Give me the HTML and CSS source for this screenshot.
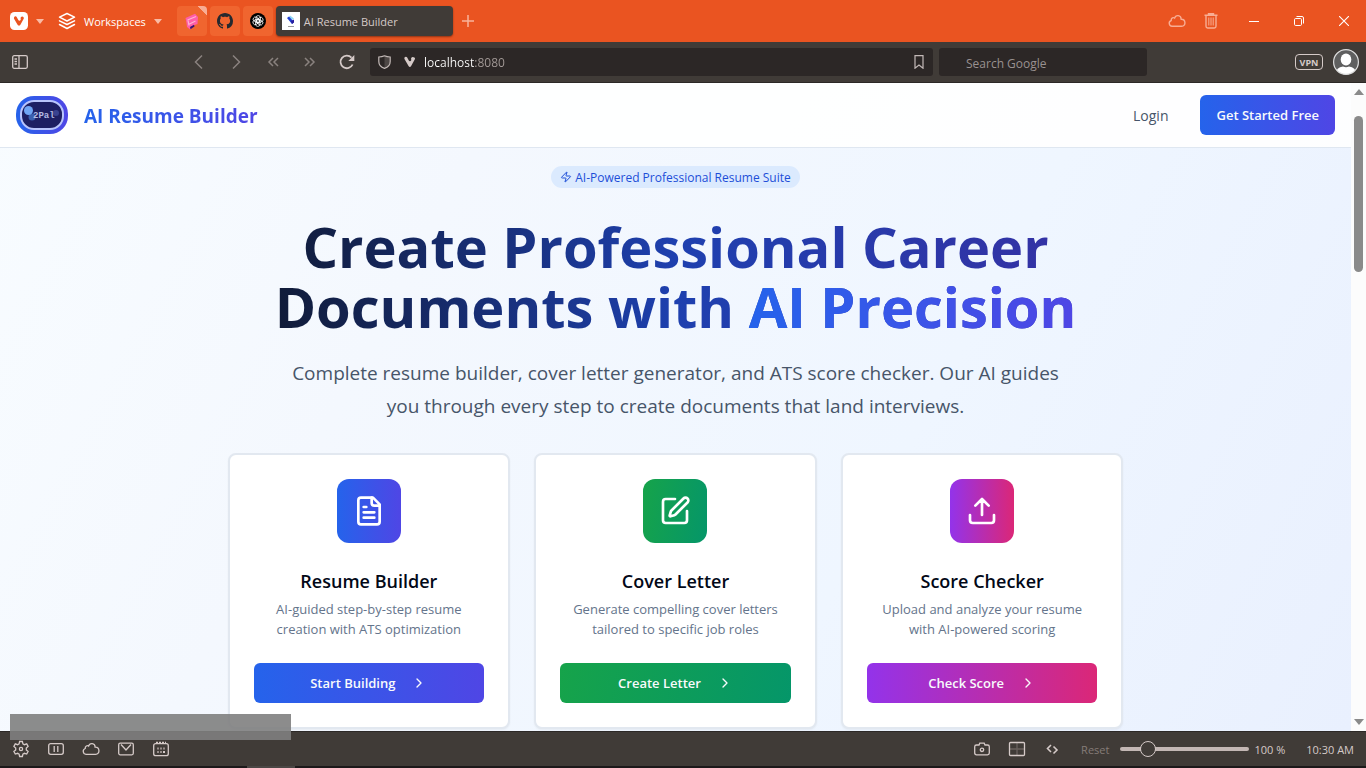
FILE: index.html
```html
<!DOCTYPE html>
<html lang="en">
<head>
<meta charset="utf-8">
<meta name="viewport" content="width=device-width, initial-scale=1">
<title>AI Resume Builder</title>
<link rel="stylesheet" href="styles.css">
</head>
<body>
<div class="browser">
  <div class="tabbar">
    <button class="bare menu" aria-label="Vivaldi menu">
      <svg width="18" height="18" viewBox="0 0 18 18"><rect width="18" height="18" rx="4.5" fill="#fff"/><path d="M4.100 5.200c.7-1.200 2.200-1 2.700 0l1.500 2.900c.5 1 2 .9 2.400-.3.1-.5 0-.9-.1-1.300-.2-1 .5-2 1.600-2s2 1.100 1.500 2.200l-3.300 6c-.7 1.200-2.100 1.200-2.800 0L4.200 7c-.3-.6-.4-1.200-.1-1.800z" fill="#ea5421"/></svg>
      <svg width="8" height="5" viewBox="0 0 8 5"><path d="M0 0h8L4 5z" fill="#f9bba5"/></svg>
    </button>
    <button class="bare workspaces">
      <svg width="18" height="18" viewBox="0 0 18 18" fill="none" stroke="#fff" stroke-width="1.500" stroke-linejoin="round" stroke-linecap="round"><path d="M9 1.500l7.500 3.700L9 9 1.500 5.200z"/><path d="M1.500 8.800L9 12.500l7.500-3.700M1.500 12.500L9 16.500l7.500-4"/></svg>
      <span>Workspaces</span>
      <svg width="8" height="5" viewBox="0 0 8 5"><path d="M0 0h8L4 5z" fill="#f9bba5"/></svg>
    </button>
    <div class="tabs">
      <button class="pin pin-marked" aria-label="Pinned tab">
        <svg width="16" height="17" viewBox="0 0 16 17"><path d="M1.500 5L11 .8l3 3.200-.5 7-3 1-4.500 4.500-3-2.500-.5-4z" fill="#ff5ea8"/><path d="M3.500 7l8.500-3.500M4.500 11.500l7-3.500M4 7.500l1 5" stroke="#ffb3d3" stroke-width="1.200" fill="none"/><path d="M6 14l4-2.200.5 1.700L6.500 16.300z" fill="#3b1673"/></svg>
      </button>
      <button class="pin" aria-label="GitHub">
        <svg width="16" height="16" viewBox="0 0 16 16"><path fill="#24292f" d="M8 0C3.580 0 0 3.580 0 8c0 3.540 2.290 6.530 5.470 7.590.4.070.55-.17.55-.38 0-.19-.01-.82-.01-1.490-2.010.37-2.530-.49-2.690-.94-.09-.23-.48-.94-.82-1.130-.28-.15-.68-.52-.01-.53.63-.01 1.080.58 1.230.82.72 1.210 1.870.87 2.330.66.070-.52.28-.87.51-1.070-1.780-.2-3.640-.89-3.640-3.950 0-.87.31-1.590.82-2.150-.08-.2-.36-1.020.08-2.120 0 0 .67-.21 2.200.82.64-.18 1.320-.27 2-.27s1.360.09 2 .27c1.530-1.040 2.200-.82 2.200-.82.44 1.100.16 1.920.08 2.120.51.56.82 1.270.82 2.150 0 3.070-1.870 3.750-3.650 3.950.29.25.54.73.54 1.480 0 1.070-.01 1.930-.01 2.200 0 .21.15.46.55.38A8.010 8.010 0 0 0 16 8c0-4.420-3.580-8-8-8z"/></svg>
      </button>
      <button class="pin" aria-label="ChatGPT">
        <svg width="16" height="16" viewBox="0 0 16 16"><circle cx="8" cy="8" r="8" fill="#000"/><g fill="none" stroke="#fff" stroke-width=".8"><rect x="6" y="2.600" width="4.400" height="6.800" rx="2.200"/><rect x="6" y="2.600" width="4.400" height="6.800" rx="2.200" transform="rotate(60 8 8)"/><rect x="6" y="2.600" width="4.400" height="6.800" rx="2.200" transform="rotate(120 8 8)"/><rect x="6" y="2.600" width="4.400" height="6.800" rx="2.200" transform="rotate(180 8 8)"/><rect x="6" y="2.600" width="4.400" height="6.800" rx="2.200" transform="rotate(240 8 8)"/><rect x="6" y="2.600" width="4.400" height="6.800" rx="2.200" transform="rotate(300 8 8)"/></g></svg>
      </button>
      <button class="tab-active">
        <svg width="18" height="18" viewBox="0 0 18 18"><rect width="18" height="18" fill="#fff"/><path d="M8 3.500l4 3-2 1.500-3-2.500z" fill="#8ed7f5"/><path d="M5 6l2-1.500 5 5.500-2 2z" fill="#1f3fd0"/><path d="M9 9l3-1.500v3L10 12z" fill="#2a1d9c"/><path d="M6 14.500h6" stroke="#9a9a9a"/></svg>
        <span>AI Resume Builder</span>
      </button>
      <button class="bare newtab" aria-label="New tab"><svg width="12" height="12" viewBox="0 0 12 12"><path d="M6 0v12M0 6h12" stroke="#f9b39b" stroke-width="1.500"/></svg></button>
    </div>
    <div class="window-actions">
      <button class="bare" aria-label="Sync"><svg width="18" height="14" viewBox="0 0 18 14" fill="none" stroke="#f8ad94" stroke-width="1.400"><path d="M4 12.300a3 3 0 0 1-.8-5.800C3 4 5.400 3 6.600 4.100 7.700.5 13 .8 13.200 5.200c4.600-.2 5.200 7.100.4 7.100z"/></svg></button>
      <button class="bare" aria-label="Closed tabs"><svg width="14" height="16" viewBox="0 0 14 16" fill="none" stroke="#f8ad94" stroke-width="1.400"><path d="M.5 2.300h13M4.500 1.500V.7h5v.8M2 2.500v10.800q0 1.700 1.700 1.700h6.600q1.700 0 1.700-1.700V2.500"/><path d="M4.800 4.500v8M7 4.500v8M9.200 4.500v8" stroke-width="1"/></svg></button>
      <button class="bare win" aria-label="Minimize"><svg width="10" height="10" viewBox="0 0 10 10"><path d="M0 5.500h10" stroke="#fff"/></svg></button>
      <button class="bare win" aria-label="Restore"><svg width="10" height="10" viewBox="0 0 10 10" fill="none" stroke="#fff"><rect x=".5" y="2.500" width="7" height="7" rx="1.200"/><path d="M2.500.5H8Q9.500.5 9.500 2v5.500"/></svg></button>
      <button class="bare win" aria-label="Close"><svg width="10" height="10" viewBox="0 0 10 10"><path d="M0 0l10 10M10 0L0 10" stroke="#fff" stroke-width="1.100"/></svg></button>
    </div>
  </div>

  <div class="navbar">
    <div class="nav-left">
      <button class="bare panel" aria-label="Show panel"><svg width="16" height="14" viewBox="0 0 16 14" fill="none" stroke="#d5cac8" stroke-width="1.300"><rect x=".7" y=".7" width="14.600" height="12.600" rx="1.500"/><path d="M7 .7v12.600M2.500 4h2.500M2.500 6.500h2.500M2.500 9h2.500"/></svg></button>
      <div class="nav-buttons">
        <button class="bare" aria-label="Back"><svg width="16" height="16" viewBox="0 0 16 16"><path d="M11 1.500L4.500 8l6.500 6.500"/></svg></button>
        <button class="bare" aria-label="Forward"><svg width="16" height="16" viewBox="0 0 16 16"><path d="M5 1.500L11.500 8 5 14.500"/></svg></button>
        <button class="bare" aria-label="Rewind"><svg width="16" height="16" viewBox="0 0 16 16"><path d="M8 4L4 8l4 4M13 4L9 8l4 4"/></svg></button>
        <button class="bare" aria-label="Fast forward"><svg width="16" height="16" viewBox="0 0 16 16"><path d="M3 4l4 4-4 4M8 4l4 4-4 4"/></svg></button>
        <button class="bare reload" aria-label="Reload"><svg width="16" height="16" viewBox="0 0 16 16"><path d="M13.600 10.500A6.300 6.300 0 1 1 12.500 3.700"/><path class="solid" d="M15.300 1v6H9.300z"/></svg></button>
      </div>
    </div>
    <div class="address">
      <svg width="13" height="14" viewBox="0 0 13 14"><path d="M6.500 1v12c2-.8 5-2.800 5.300-6V2Q9 2 6.500 1z" fill="#4d4745"/><path d="M6.500.8Q9 2 12.200 2v4.500c0 3.700-3 6-5.700 6.900C3.800 12.500.8 10.200.8 6.500V2Q4 2 6.500.8z" fill="none" stroke="#c3b9b7" stroke-width="1.200"/></svg>
      <svg width="12" height="12" viewBox="0 0 12 12"><path d="M.5 1.600c.7-1.200 2.200-1 2.700 0l1.600 3c.5 1 2 .9 2.400-.3.1-.5 0-.9-.1-1.300-.2-1 .5-2 1.600-2s2.800.9 2.300 2l-4 7.300c-.6 1-1.700 1-2.300 0L.6 3.300c-.3-.6-.4-1.100-.1-1.700z" fill="#d5cac8"/></svg>
      <input class="url" type="text" value="localhost:8080" aria-label="Address">
      <button class="bare" aria-label="Bookmark"><svg width="10" height="14" viewBox="0 0 10 14"><path d="M1 .7h8v12.500L5 10 1 13.200z" fill="none" stroke="#c3b9b7" stroke-width="1.200"/></svg></button>
    </div>
    <input class="search" type="text" placeholder="Search Google" aria-label="Search Google">
    <div class="nav-right">
      <button class="vpn">VPN</button>
      <button class="bare" aria-label="Profile"><svg width="26" height="26" viewBox="0 0 26 26"><defs><clipPath id="av"><circle cx="13" cy="13" r="12.500"/></clipPath></defs><circle cx="13" cy="13" r="12.500" fill="#5f5f5f"/><g clip-path="url(#av)" fill="#fff"><ellipse cx="13" cy="10.500" rx="5.300" ry="6"/><path d="M2 27q1-9 8-9.500 3 1.500 6 0 7 .5 8 9.500z"/></g><circle cx="13" cy="13" r="12.400" fill="none" stroke="#ddd" stroke-width="1.200"/></svg></button>
    </div>
  </div>

  <div class="viewport">
    <div class="page">
      <header class="site-header">
        <a class="brand" href="#">
          <svg width="52" height="38" viewBox="0 0 52 38"><defs><linearGradient id="lg"><stop stop-color="#2563eb"/><stop offset="1" stop-color="#4f46e5"/></linearGradient></defs><rect width="52" height="38" rx="18" fill="url(#lg)"/><rect x="5" y="5" width="42" height="28" rx="13" fill="#1e1f63" stroke="#b9c4fb" stroke-width="2"/><circle cx="40" cy="17" r="3" fill="#3a4390"/><circle cx="16" cy="21" r="3.500" fill="#3c5fae"/><circle cx="12.500" cy="14.500" r="4.500" fill="#70a5f5"/><text x="17" y="22" class="logo-text">2Pal</text></svg>
          <span class="brand-name">AI Resume Builder</span>
        </a>
        <nav class="site-nav">
          <a class="login" href="#">Login</a>
          <button class="btn blue">Get Started Free</button>
        </nav>
      </header>
      <main class="hero">
        <div class="badge"><svg width="12" height="12" viewBox="0 0 24 24" fill="none" stroke="currentColor" stroke-width="2" stroke-linecap="round" stroke-linejoin="round"><path d="M4 14a1 1 0 0 1-.78-1.630l9.900-10.200a.5.5 0 0 1 .86.460l-1.920 6.020A1 1 0 0 0 13 10h7a1 1 0 0 1 .78 1.630l-9.900 10.200a.5.5 0 0 1-.86-.46l1.920-6.020A1 1 0 0 0 11 14z"/></svg>AI-Powered Professional Resume Suite</div>
        <h1>Create Professional Career<br>Documents with <span>AI Precision</span></h1>
        <p class="lead">Complete resume builder, cover letter generator, and ATS score checker. Our AI guides<br>you through every step to create documents that land interviews.</p>
        <div class="cards">
          <section class="card">
            <div class="icon blue"><svg viewBox="0 0 24 24"><path d="M15 2H6a2 2 0 0 0-2 2v16a2 2 0 0 0 2 2h12a2 2 0 0 0 2-2V7Z"/><path d="M14 2v4a2 2 0 0 0 2 2h4M10 9H8M16 13H8M16 17H8"/></svg></div>
            <h2>Resume Builder</h2>
            <p>AI-guided step-by-step resume<br>creation with ATS optimization</p>
            <button class="btn blue">Start Building<svg viewBox="0 0 24 24"><path d="m9 18 6-6-6-6"/></svg></button>
          </section>
          <section class="card">
            <div class="icon green"><svg viewBox="0 0 24 24"><path d="M12 3H5a2 2 0 0 0-2 2v14a2 2 0 0 0 2 2h14a2 2 0 0 0 2-2v-7"/><path d="M18.375 2.625a1 1 0 0 1 3 3l-9.013 9.014a2 2 0 0 1-.853.505l-2.873.840a.5.5 0 0 1-.620-.620l.840-2.873a2 2 0 0 1 .506-.852z"/></svg></div>
            <h2>Cover Letter</h2>
            <p>Generate compelling cover letters<br>tailored to specific job roles</p>
            <button class="btn green">Create Letter<svg viewBox="0 0 24 24"><path d="m9 18 6-6-6-6"/></svg></button>
          </section>
          <section class="card">
            <div class="icon pink"><svg viewBox="0 0 24 24"><path d="M21 15v4a2 2 0 0 1-2 2H5a2 2 0 0 1-2-2v-4M17 8l-5-5-5 5M12 3v12"/></svg></div>
            <h2>Score Checker</h2>
            <p>Upload and analyze your resume<br>with AI-powered scoring</p>
            <button class="btn pink">Check Score<svg viewBox="0 0 24 24"><path d="m9 18 6-6-6-6"/></svg></button>
          </section>
        </div>
      </main>
    </div>
    <div class="scrollbar">
      <svg width="10" height="6" viewBox="0 0 10 6"><path d="M0 6L5 0l5 6z" fill="#8a8a8a"/></svg>
      <div class="rail"><div class="thumb"></div></div>
      <svg width="10" height="6" viewBox="0 0 10 6"><path d="M0 0l5 6 5-6z" fill="#8a8a8a"/></svg>
    </div>
  </div>

  <div class="statusbar">
    <div class="link-preview"></div>
    <div class="status-left">
      <button class="bare" aria-label="Settings"><svg width="18" height="18" viewBox="0 0 18 18"><path d="M7.600 1.500h2.800l.5 2.300 1.500.9 2.300-.8 1.400 2.500-1.800 1.600v1.900l1.800 1.600-1.400 2.500-2.300-.7-1.500.8-.5 2.400H7.600l-.5-2.400-1.500-.8-2.300.7-1.400-2.500 1.800-1.600V8L1.900 6.400l1.400-2.500 2.300.8 1.500-.9z"/><circle cx="9" cy="9" r="1.600"/></svg></button>
      <button class="bare" aria-label="Break mode"><svg width="18" height="18" viewBox="0 0 18 18"><rect x="1.700" y="3.700" width="14.600" height="10.600" rx="2"/><path d="M7.200 6v6M10.800 6v6"/></svg></button>
      <button class="bare" aria-label="Sync"><svg width="18" height="18" viewBox="0 0 18 18"><path d="M4 14.300a3 3 0 0 1-.8-5.800C3 6 5.400 5 6.600 6.100 7.700 2.500 13 2.800 13.200 7.200c4.600-.2 5.200 7.100.4 7.100z"/></svg></button>
      <button class="bare" aria-label="Mail"><svg width="18" height="18" viewBox="0 0 18 18"><rect x="1.700" y="3.200" width="14.600" height="11.600" rx="1.500"/><path d="M4 4.500l5 5.500 5-5.500"/></svg></button>
      <button class="bare" aria-label="Calendar"><svg width="18" height="18" viewBox="0 0 18 18"><rect x="1.700" y="3.700" width="14.600" height="12" rx="2"/><path d="M4 2.800h10" stroke-width="2" stroke-dasharray="2 1"/><path d="M5 8.500h8M5 12h5" stroke="#978d8a" stroke-width="2" stroke-dasharray="2 1"/><path d="M11 12h2" stroke-width="2"/></svg></button>
    </div>
    <div class="status-right">
      <button class="bare" aria-label="Capture"><svg width="18" height="18" viewBox="0 0 18 18"><path d="M3.500 5H6l.8-1.800h4.400L12 5h2.500q1.800 0 1.800 1.800V13q0 1.800-1.800 1.800h-11Q1.700 14.800 1.700 13V6.800Q1.700 5 3.500 5z"/><circle cx="9" cy="9.800" r="1.700"/></svg></button>
      <button class="bare" aria-label="Tiling"><svg width="18" height="18" viewBox="0 0 18 18"><path d="M9 3v12M2 9h14" style="stroke:#69615e"/><rect x="1.500" y="2.500" width="15" height="13" rx="1"/></svg></button>
      <button class="bare" aria-label="Page actions"><svg width="18" height="18" viewBox="0 0 18 18"><path d="M8 5L4.500 8.500 8 12M10.500 6.500L14 10l-3.500 3.500" stroke-width="1.600"/></svg></button>
      <button class="bare reset">Reset</button>
      <input class="zoom" type="range" min="0" max="100" value="17" aria-label="Page zoom">
      <span class="percent">100 %</span>
      <span class="clock">10:30 AM</span>
    </div>
  </div>
  <div class="edge"><div class="edge-mark"></div></div>
</div>
</body>
</html>
```
FILE: styles.css
```css
* { box-sizing: border-box; }
body { margin: 0; font-family: "Open Sans", "Noto Sans", sans-serif; }
button, input { font: inherit; }
svg { display: block; flex: none; }
h1, h2, p { margin: 0; }

.browser { display: flex; flex-direction: column; height: 100vh; overflow: hidden; font-size: 11px; }
.bare { display: flex; align-items: center; justify-content: center; border: 0; padding: 0; background: none; color: inherit; }

/* Tab bar */
.tabbar { display: flex; align-items: center; height: 42px; flex: none; padding-left: 10px; background: #ea5421; color: #fff; }
.menu { gap: 8px; }
.workspaces { gap: 8px; margin-left: 14px; }
.tabs { display: flex; align-items: center; gap: 3px; margin-left: 15px; }
.pin { display: flex; align-items: center; justify-content: center; width: 30px; height: 30px; border: 0; padding: 0; border-radius: 4px; background: #f0652f; }
.pin-marked { background: linear-gradient(45deg, transparent 84%, #f8ad94 84%) #f0652f; }
.tab-active { display: flex; align-items: center; gap: 4px; width: 177px; height: 30px; border: 0; padding: 0 6px; border-radius: 4px; background: #403b37; color: #d5cac8; box-shadow: 0 1px 2px rgba(0, 0, 0, .4); }
.newtab { width: 24px; height: 30px; }
.window-actions { display: flex; align-items: center; gap: 18px; margin-left: auto; }
.win { width: 45px; height: 42px; }
.win + .win { margin-left: -18px; }
.window-actions .win:nth-child(3) { margin-left: -5px; }

/* Navigation bar */
.navbar { display: flex; align-items: center; gap: 6px; height: 41px; flex: none; padding: 0 7px 0 12px; background: #403b37; border-bottom: 1px solid #2c2826; }
.nav-left { display: flex; align-items: center; justify-content: space-between; width: 352px; flex: none; padding-right: 9px; }
.nav-buttons { display: flex; gap: 21px; }
.nav-buttons path { fill: none; stroke: #8a827f; stroke-width: 1.500; }
.nav-buttons .reload path { stroke: #d5cac8; stroke-width: 1.800; }
.nav-buttons .reload .solid { fill: #d5cac8; stroke: none; }
.address { display: flex; align-items: center; flex: 1; gap: 13px; height: 28px; min-width: 0; padding: 0 9px 0 8px; border-radius: 3px; background: #2c2726; }
.url { flex: 1; min-width: 0; margin-left: -5px; border: 0; padding: 0; outline: 0; font-size: 12px; color: transparent; background: linear-gradient(90deg, #fff 51px, #a59c99 51px); -webkit-background-clip: text; background-clip: text; }
.search { width: 208px; height: 28px; border: 0; border-radius: 3px; padding: 2px 8px 0 27px; background: #2c2726; color: #fff; font-size: 12px; }
.search::placeholder { color: #999190; }
.nav-right { display: flex; align-items: center; justify-content: flex-end; gap: 10px; width: 206px; }
.vpn { height: 16px; width: 28px; border: 1px solid #d5cac8; border-radius: 4px; padding: 0; background: none; color: #d5cac8; font: bold 9px/13px "Open Sans", sans-serif; }

/* Web page */
.viewport { display: flex; flex: 1; min-height: 0; }
.page { flex: 1; min-width: 0; overflow: hidden; background: linear-gradient(118deg, #f8fcff 0%, #f4f8fe 30%, #eff6ff 65%, #e9f0fe 100%); }
.site-header { display: flex; align-items: center; justify-content: space-between; height: 65px; padding: 0 16px; background: rgba(255, 255, 255, .9); border-bottom: 1px solid #dfe7f1; }
.brand { display: flex; align-items: center; gap: 16px; text-decoration: none; }
.brand-name { padding-top: 2px; font-size: 19px; font-weight: 700; color: transparent; background: linear-gradient(90deg, #2563eb, #4f46e5); -webkit-background-clip: text; background-clip: text; }
.logo-text { font: bold 9px "Liberation Mono", monospace; fill: #b4bbe4; }
.site-nav { display: flex; align-items: center; gap: 32px; }
.login { font-size: 14px; font-weight: 500; color: #475569; text-decoration: none; }
.btn { display: flex; align-items: center; justify-content: center; gap: 16px; height: 40px; border: 0; border-radius: 6px; padding: 0 16px; color: #f8fafc; font-size: 13px; font-weight: 600; }
.btn svg { width: 16px; height: 16px; fill: none; stroke: currentColor; stroke-width: 2; stroke-linecap: round; stroke-linejoin: round; }
.blue { background: linear-gradient(90deg, #2563eb, #4f46e5); }
.green { background: linear-gradient(100deg, #16a34a, #059669); }
.pink { background: linear-gradient(90deg, #9333ea, #db2777); }

.hero { display: flex; flex-direction: column; align-items: center; padding: 18px 16px 40px; text-align: center; }
.badge { display: flex; align-items: center; gap: 3px; height: 22px; padding: 0 9px; border-radius: 11px; background: #dbeafe; color: #1d4ed8; font-size: 12px; font-weight: 500; }
h1 { width: 100%; max-width: 896px; margin-top: 28px; font-size: 56px; line-height: 60px; font-weight: 700; white-space: nowrap; color: transparent; background: linear-gradient(90deg, #0f172a, #1e40af 50%, #3730a3); -webkit-background-clip: text; background-clip: text; }
h1 span { background: linear-gradient(90deg, #2563eb, #4f46e5); -webkit-background-clip: text; background-clip: text; }
.lead { margin-top: 21px; font-size: 19px; line-height: 33px; color: #475569; }
.cards { display: grid; grid-template-columns: repeat(3, 1fr); gap: 24px; width: 100%; max-width: 896px; margin-top: 30px; }
.card { display: flex; flex-direction: column; align-items: center; padding: 24px; border: 2px solid #e2e8f0; border-radius: 8px; background: #fff; box-shadow: 0 1px 2px rgba(0, 0, 0, .05); }
.icon { display: flex; align-items: center; justify-content: center; width: 64px; height: 64px; border-radius: 12px; }
.icon svg { width: 32px; height: 32px; fill: none; stroke: #fff; stroke-width: 2; stroke-linecap: round; stroke-linejoin: round; }
h2 { margin-top: 24px; font-size: 18px; line-height: 28px; font-weight: 600; color: #020817; }
.card p { margin-top: 4px; font-size: 13px; line-height: 20px; color: #64748b; white-space: nowrap; }
.card .btn { width: 100%; margin-top: 24px; }

.scrollbar { display: flex; flex-direction: column; align-items: center; width: 15px; padding: 6px 0; background: #fcfcfc; }
.rail { flex: 1; width: 9px; padding-top: 21px; }
.thumb { height: 156px; border-radius: 5px; background: #8a8a8a; }

/* Status bar */
.statusbar { position: relative; display: flex; align-items: center; justify-content: space-between; height: 35px; flex: none; padding: 0 12px; border-top: 1px solid #2c2826; background: #403b37; color: #d5cac8; }
.statusbar svg { fill: none; stroke: #d5cac8; stroke-width: 1.300; }
.link-preview { position: absolute; left: 10px; top: -18px; width: 281px; height: 26px; background: rgba(128, 128, 128, .9); }
.status-left, .status-right { display: flex; align-items: center; gap: 17px; }
.reset { color: #857b77; margin-left: 3px; }
.zoom { appearance: none; width: 129px; height: 16px; margin: 0 -12px 0 -6px; background: none; }
.zoom::-webkit-slider-runnable-track { height: 4px; border-radius: 2px; background: #c3b7b4; }
.zoom::-webkit-slider-thumb { appearance: none; width: 16px; height: 16px; margin-top: -6px; border: 1px solid #d5cac8; border-radius: 50%; background: #403b37; }
.clock { margin-left: 4px; }
.edge { height: 2px; flex: none; padding-left: 247px; background: #1c191a; }
.edge-mark { width: 48px; height: 2px; background: #4b4745; }
```
